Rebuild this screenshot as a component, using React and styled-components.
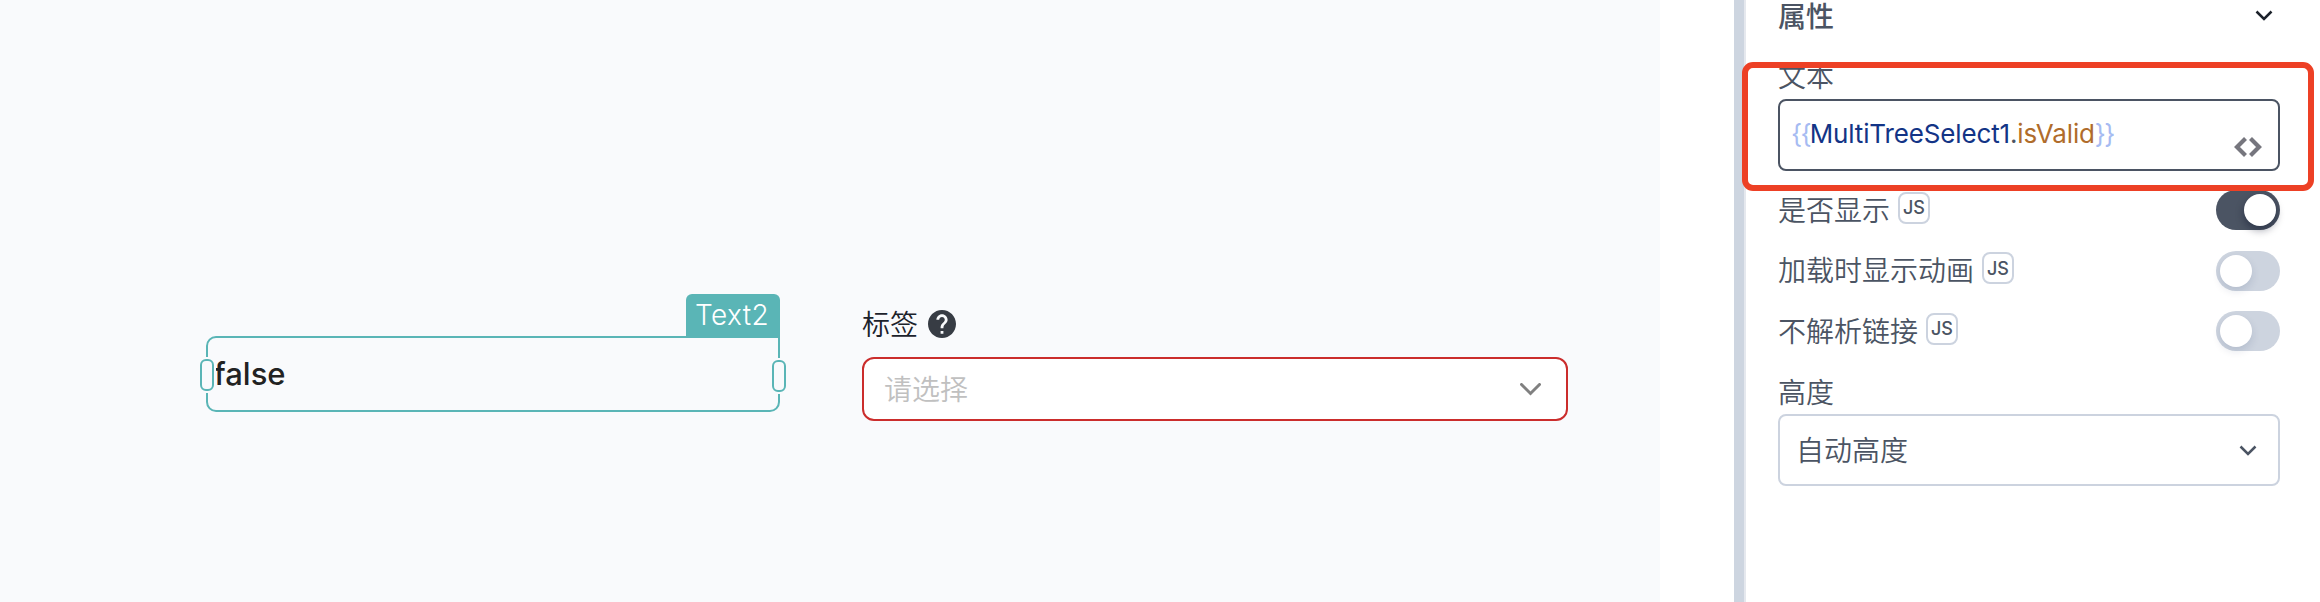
import React from "react";
import styled, { createGlobalStyle } from "styled-components";

const GlobalStyle = createGlobalStyle`
  * {
    box-sizing: border-box;
  }
  body {
    margin: 0;
    background: #fff;
    font-family: Inter, "Noto Sans CJK SC", sans-serif;
    font-size: 28px;
    font-weight: 350;
    color: #4b5463;
  }
`

const Page = styled.div`
  display: flex;
  width: 2320px;
  height: 602px;
  overflow: hidden;
`

const Canvas = styled.main`
  display: flex;
  align-items: flex-start;
  width: 1660px;
  padding-left: 206px;
  background: #f9fafc;
`

const TextWidget = styled.div`
  position: relative;
  display: flex;
  align-items: center;
  width: 574px;
  height: 76px;
  margin-top: 336px;
  padding-left: 6px;
  border: 2px solid #5ab5b6;
  border-radius: 10px 0 10px 10px;
`

const WidgetValue = styled.span`
  font-size: 31px;
  font-weight: 500;
  line-height: 40px;
  color: #222;
`

const WidgetName = styled.div`
  position: absolute;
  right: -2px;
  bottom: 72px;
  width: 94px;
  height: 44px;
  padding-left: 9px;
  border-radius: 6px 6px 0 0;
  background: #5ab5b6;
  color: #fff;
  font-size: 28px;
  font-weight: 300;
  line-height: 42px;
  letter-spacing: 0.4px;
`

const Handle = styled.i`
  position: absolute;
  top: ${props => props.$side === "left" ? 21 : 22}px;
  ${props => props.$side}: -8px;
  width: 14px;
  height: 32px;
  border: 2px solid #5ab5b6;
  border-radius: 6px;
  background: #f9fafc;
  box-shadow: 0 0 0 2px #f9fafc;
`

const FormItem = styled.div`
  width: 706px;
  margin: 304px 0 0 82px;
`

const FormLabel = styled.div`
  display: flex;
  align-items: center;
  gap: 10px;
  height: 40px;
  margin-bottom: 13px;
  color: #1c222b;
`

const Label = styled.span`
  padding-bottom: ${props => props.$lift || 3}px;
`

const SelectBox = styled.div`
  display: flex;
  align-items: center;
  justify-content: space-between;
  height: ${props => props.$invalid ? 64 : 72}px;
  padding: ${props => props.$invalid ? "0 25px 0 20px" : "0 21px 0 16px"};
  border: 2px solid ${props => props.$invalid ? "#cb2d2c" : "#ccd3df"};
  border-radius: ${props => props.$invalid ? 12 : 8}px;
  background: #fff;

  svg {
    margin-top: 2px;
  }
`

const Placeholder = styled.span`
  padding-bottom: 2px;
  color: #c0c0c0;
`

const Divider = styled.div`
  width: 12px;
  margin-left: 74px;
  background: #cdd5e0;
  border-right: 2px solid #e5e8ee;
`

const Panel = styled.aside`
  position: relative;
  flex: 1;
  padding: 0 40px 0 32px;
`

const PanelHeader = styled.div`
  display: flex;
  align-items: center;
  justify-content: space-between;
  height: 32px;
  padding-right: 7px;
  font-weight: 500;
`

const FieldLabel = styled.div`
  height: 40px;
  line-height: ${props => props.$line}px;
  margin-top: ${props => props.$gap}px;
`

const CodeInput = styled.div`
  display: flex;
  justify-content: space-between;
  height: 72px;
  margin-top: 3px;
  padding: 0 15px 0 11px;
  border: 2px solid #4b5463;
  border-radius: 8px;
`

const Code = styled.code`
  font-family: Inter, sans-serif;
  font-size: 26px;
  font-weight: 400;
  line-height: 66px;
  letter-spacing: -0.15px;
  white-space: nowrap;
`

const Brace = styled.span`
  color: #a6bbf2;
  letter-spacing: -1.7px;
`

const Variable = styled.span`
  color: #133486;
`

const Property = styled.span`
  color: #b06c2b;
`

const CodeIcon = styled.svg`
  width: 30px;
  height: 24px;
  margin-top: 34px;
`

const SwitchList = styled.div`
  display: flex;
  flex-direction: column;
  gap: 20.5px;
  margin-top: 19px;
`

const SwitchRow = styled.div`
  display: flex;
  align-items: center;
  height: 40px;
`

const JsBadge = styled.span`
  display: flex;
  align-items: center;
  justify-content: center;
  width: 32px;
  height: 32px;
  margin: -5px auto 0 8px;
  border: 2px solid #ccd3df;
  border-radius: 8px;
  font-size: 18px;
  font-weight: 450;
`

const Switch = styled.span`
  display: flex;
  justify-content: ${props => props.$on ? "flex-end" : "flex-start"};
  width: 64px;
  height: 40px;
  padding: 4px;
  border-radius: 20px;
  background: ${props => props.$on ? "#4b5463" : "#cdd4df"};
`

const Knob = styled.span`
  width: 32px;
  height: 32px;
  border-radius: 50%;
  background: #fff;
  box-shadow: 0 4px 8px ${props => props.$on ? "rgba(0, 11, 36, 0.4)" : "rgba(0, 35, 80, 0.12)"};
`

const Highlight = styled.div`
  position: absolute;
  top: 62px;
  left: -4px;
  width: 572px;
  height: 129px;
  border: 6px solid #ed4025;
  border-radius: 11px;
`

const Chevron = ({ width = 18, color, stroke = 2.5, cap = "butt" }) => (
  <svg width={width} height={width * 0.66} viewBox={`0 0 ${width} ${width * 0.66}`} fill="none">
    <path
      d={`M1.5 1.5 L${width / 2} ${width / 2} L${width - 1.5} 1.5`}
      stroke={color}
      strokeWidth={stroke}
      strokeLinecap={cap}
    />
  </svg>
)

const HelpIcon = () => (
  <svg width="28" height="28" viewBox="2 2 20 20">
    <path
      fill="#373c44"
      d="M12 2C6.48 2 2 6.48 2 12s4.48 10 10 10 10-4.48 10-10S17.52 2 12 2zm1 17h-2v-2h2v2zm2.07-7.75l-.9.92C13.45 12.9 13 13.5 13 15h-2v-.5c0-1.1.45-2.1 1.17-2.83l1.24-1.26c.37-.36.59-.86.59-1.41 0-1.1-.9-2-2-2s-2 .9-2 2H8c0-2.21 1.79-4 4-4s4 1.79 4 4c0 .88-.36 1.68-.93 2.25z"
    />
  </svg>
)

const switches = [
  { label: "是否显示", on: true },
  { label: "加载时显示动画", on: false },
  { label: "不解析链接", on: false },
]

const App = () => {
  const switchRows = switches.map(({ label, on }) => (
    <SwitchRow key={label}>
      <Label>{label}</Label>
      <JsBadge>JS</JsBadge>
      <Switch $on={on}><Knob $on={on} /></Switch>
    </SwitchRow>
  ))

  return (
    <Page>
      <GlobalStyle />
      <Canvas>
        <TextWidget>
          <WidgetName>Text2</WidgetName>
          <Handle $side="left" />
          <Handle $side="right" />
          <WidgetValue>false</WidgetValue>
        </TextWidget>
        <FormItem>
          <FormLabel><Label $lift={2}>标签</Label><HelpIcon /></FormLabel>
          <SelectBox $invalid>
            <Placeholder>请选择</Placeholder>
            <Chevron width={21} color="#808080" stroke={3} cap="round" />
          </SelectBox>
        </FormItem>
      </Canvas>
      <Divider />
      <Panel>
        <PanelHeader>
          <Label $lift={2}>属性</Label>
          <Chevron color="#1c222b" />
        </PanelHeader>
        <FieldLabel $gap={24} $line={43}>文本</FieldLabel>
        <CodeInput>
          <Code>
            <Brace>{"{{"}</Brace>
            <Variable>MultiTreeSelect1</Variable>.
            <Property>isValid</Property>
            <Brace>{"}}"}</Brace>
          </Code>
          <CodeIcon viewBox="0 0 30 24" fill="none" stroke="#76767e" strokeWidth="4.2">
            <path d="M12.5 3.5 L4 12 L12.5 20.5 M17.5 3.5 L26 12 L17.5 20.5" />
          </CodeIcon>
        </CodeInput>
        <SwitchList>{switchRows}</SwitchList>
        <FieldLabel $gap={23} $line={38}>高度</FieldLabel>
        <SelectBox>
          <Label>自动高度</Label>
          <Chevron color="#4b5463" />
        </SelectBox>
        <Highlight />
      </Panel>
    </Page>
  )
}

export default App
